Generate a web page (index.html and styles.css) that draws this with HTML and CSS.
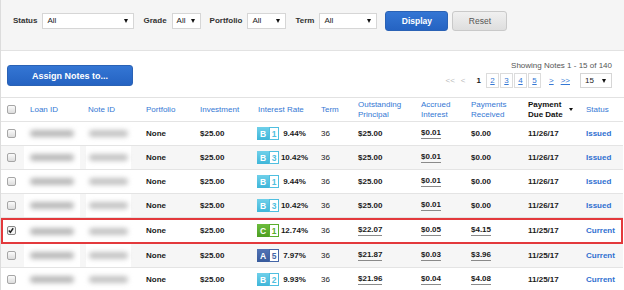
FILE: index.html
```html
<!DOCTYPE html>
<html lang="en">
<head>
  <meta charset="UTF-8" />
  <title>My Notes</title>
  <link rel="stylesheet" href="styles.css">
</head>
<body>
  <div class="page">

    <!-- Filters -->
    <div class="filters">
      <span class="lbl">Status</span>
      <div class="sel w-status"><span>All</span><i class="arr"></i></div>
      <span class="lbl">Grade</span>
      <div class="sel w-grade"><span>All</span><i class="arr"></i></div>
      <span class="lbl">Portfolio</span>
      <div class="sel w-port"><span>All</span><i class="arr"></i></div>
      <span class="lbl">Term</span>
      <div class="sel w-term"><span>All</span><i class="arr"></i></div>
      <button class="btn btn-blue btn-display">Display</button>
      <button class="btn btn-grey">Reset</button>
    </div>

    <!-- Toolbar -->
    <div class="toolbar">
      <button class="btn btn-blue btn-assign">Assign Notes to...</button>
      <div class="pager-wrap">
        <div class="showing">Showing Notes 1 - 15 of 140</div>
        <div class="pager">
          <span class="pg-off">&lt;&lt;</span>
          <span class="pg-off">&lt;</span>
          <span class="pg-cur">1</span>
          <a class="pg-box">2</a><a class="pg-box">3</a><a class="pg-box">4</a><a class="pg-box">5</a>
          <a class="pg-link">&gt;</a>
          <a class="pg-link">&gt;&gt;</a>
          <div class="sel w-per"><span>15</span><i class="arr"></i></div>
        </div>
      </div>
    </div>

    <!-- Notes table -->
    <div class="grid">
      <div class="row head">
        <div class="c"><span class="cb"></span></div>
        <div class="c">Loan ID</div>
        <div class="c">Note ID</div>
        <div class="c">Portfolio</div>
        <div class="c">Investment</div>
        <div class="c">Interest Rate</div>
        <div class="c">Term</div>
        <div class="c">Outstanding<br>Principal</div>
        <div class="c">Accrued<br>Interest</div>
        <div class="c">Payments<br>Received</div>
        <div class="c sorted"><span>Payment<br>Due Date</span><i class="sort"></i></div>
        <div class="c">Status</div>
      </div>

      <div class="row">
        <div class="c"><span class="cb"></span></div>
        <div class="c id-loan"><span class="blur"></span></div>
        <div class="c id-note"><span class="blur"></span></div>
        <div class="c">None</div>
        <div class="c">$25.00</div>
        <div class="c"><span class="grade g-b"><b>B</b><em>1</em></span><span class="rate">9.44%</span></div>
        <div class="c term">36</div>
        <div class="c">$25.00</div>
        <div class="c"><u>$0.01</u></div>
        <div class="c">$0.00</div>
        <div class="c">11/26/17</div>
        <div class="c st">Issued</div>
      </div>

      <div class="row alt">
        <div class="c"><span class="cb"></span></div>
        <div class="c id-loan"><span class="blur"></span></div>
        <div class="c id-note"><span class="blur"></span></div>
        <div class="c">None</div>
        <div class="c">$25.00</div>
        <div class="c"><span class="grade g-b"><b>B</b><em>3</em></span><span class="rate">10.42%</span></div>
        <div class="c term">36</div>
        <div class="c">$25.00</div>
        <div class="c"><u>$0.01</u></div>
        <div class="c">$0.00</div>
        <div class="c">11/26/17</div>
        <div class="c st">Issued</div>
      </div>

      <div class="row">
        <div class="c"><span class="cb"></span></div>
        <div class="c id-loan"><span class="blur"></span></div>
        <div class="c id-note"><span class="blur"></span></div>
        <div class="c">None</div>
        <div class="c">$25.00</div>
        <div class="c"><span class="grade g-b"><b>B</b><em>1</em></span><span class="rate">9.44%</span></div>
        <div class="c term">36</div>
        <div class="c">$25.00</div>
        <div class="c"><u>$0.01</u></div>
        <div class="c">$0.00</div>
        <div class="c">11/26/17</div>
        <div class="c st">Issued</div>
      </div>

      <div class="row alt">
        <div class="c"><span class="cb"></span></div>
        <div class="c id-loan"><span class="blur"></span></div>
        <div class="c id-note"><span class="blur"></span></div>
        <div class="c">None</div>
        <div class="c">$25.00</div>
        <div class="c"><span class="grade g-b"><b>B</b><em>3</em></span><span class="rate">10.42%</span></div>
        <div class="c term">36</div>
        <div class="c">$25.00</div>
        <div class="c"><u>$0.01</u></div>
        <div class="c">$0.00</div>
        <div class="c">11/26/17</div>
        <div class="c st">Issued</div>
      </div>

      <div class="row picked">
        <div class="c"><span class="cb on"><svg viewBox="0 0 9 9" width="9" height="9"><path d="M2 4.5 L3.8 6.5 L7 2" fill="none" stroke="#222" stroke-width="1.6"/></svg></span></div>
        <div class="c id-loan"><span class="blur"></span></div>
        <div class="c id-note"><span class="blur"></span></div>
        <div class="c">None</div>
        <div class="c">$25.00</div>
        <div class="c"><span class="grade g-c"><b>C</b><em>1</em></span><span class="rate">12.74%</span></div>
        <div class="c term">36</div>
        <div class="c"><u>$22.07</u></div>
        <div class="c"><u>$0.05</u></div>
        <div class="c"><u>$4.15</u></div>
        <div class="c">11/25/17</div>
        <div class="c st">Current</div>
      </div>

      <div class="row alt">
        <div class="c"><span class="cb"></span></div>
        <div class="c id-loan"><span class="blur"></span></div>
        <div class="c id-note"><span class="blur"></span></div>
        <div class="c">None</div>
        <div class="c">$25.00</div>
        <div class="c"><span class="grade g-a"><b>A</b><em>5</em></span><span class="rate">7.97%</span></div>
        <div class="c term">36</div>
        <div class="c"><u>$21.87</u></div>
        <div class="c"><u>$0.03</u></div>
        <div class="c"><u>$3.96</u></div>
        <div class="c">11/25/17</div>
        <div class="c st">Current</div>
      </div>

      <div class="row">
        <div class="c"><span class="cb"></span></div>
        <div class="c id-loan"><span class="blur"></span></div>
        <div class="c id-note"><span class="blur"></span></div>
        <div class="c">None</div>
        <div class="c">$25.00</div>
        <div class="c"><span class="grade g-b"><b>B</b><em>2</em></span><span class="rate">9.93%</span></div>
        <div class="c term">36</div>
        <div class="c"><u>$21.96</u></div>
        <div class="c"><u>$0.04</u></div>
        <div class="c"><u>$4.08</u></div>
        <div class="c">11/25/17</div>
        <div class="c st">Current</div>
      </div>
    </div>

  </div>
</body>
</html>
```

FILE: styles.css
```css
* { box-sizing: border-box; }
html, body { margin: 0; background: #fff; }
body {
  font-family: "Liberation Sans", Arial, sans-serif;
  font-size: 8px;
  color: #1a1a1a;
  overflow: hidden;
}

.page {
  width: 624px;
  border-left: 1px solid #dcdcdc;
}

/* filter bar */
.filters {
  height: 51px;
  background: #f5f5f5;
  border-bottom: 1px solid #e2e2e2;
  display: flex;
  align-items: center;
  padding: 0 0 9px 12px;
}
.lbl {
  font-weight: bold;
  color: #333;
  margin-right: 5px;
}
.sel {
  height: 16px;
  background: #fff;
  border: 1px solid #d6d6d6;
  display: flex;
  align-items: center;
  justify-content: space-between;
  padding: 0 5px 0 4px;
  margin-right: 9px;
  color: #222;
}
.arr {
  width: 0; height: 0;
  border-left: 2.5px solid transparent;
  border-right: 2.5px solid transparent;
  border-top: 4px solid #111;
  margin-top: 1px;
}
.w-status { width: 92px; }
.w-grade { width: 29px; }
.w-port { width: 39px; }
.w-term { width: 58px; margin-right: 8px; }
.w-per { width: 32px; margin: 0 0 0 10px; height: 15px; }

.btn {
  font-family: inherit;
  font-size: 8.5px;
  font-weight: bold;
  border-radius: 3px;
  cursor: pointer;
  padding: 0;
}
.btn-blue {
  color: #fff;
  background: linear-gradient(#3476d4, #2563c2);
  border: 1px solid #2a62b5;
}
.btn-grey {
  color: #555;
  font-weight: normal;
  background: linear-gradient(#f0f0f0, #dedede);
  border: 1px solid #c9c9c9;
  width: 55px;
  height: 20px;
  margin-left: 4px;
}
.btn-display { width: 63px; height: 20px; }

/* toolbar */
.toolbar {
  height: 47px;
  border-bottom: 1px solid #e2e2e2;
  display: flex;
  justify-content: space-between;
  padding: 0 12px 0 6px;
}
.btn-assign {
  width: 126px;
  height: 21px;
  margin-top: 14px;
  font-size: 9px;
}
.pager-wrap {
  display: flex;
  flex-direction: column;
  align-items: flex-end;
  padding-top: 10px;
}
.showing { color: #555; line-height: 10px; }
.pager {
  display: flex;
  align-items: center;
  margin-top: 2px;
}
.pg-off { color: #bbb; margin-right: 6px; }
.pg-cur { font-weight: bold; margin: 0 5px 0 5px; }
.pg-box {
  width: 13px;
  height: 15px;
  border: 1px solid #dcdcdc;
  margin-right: 1px;
  color: #3578d4;
  text-decoration: underline;
  display: flex;
  align-items: center;
  justify-content: center;
}
.pg-link { color: #3578d4; text-decoration: underline; margin-left: 7px; }

/* notes grid */
.grid { width: 622px; }
.row {
  display: grid;
  grid-template-columns: 22px 58px 58px 54px 58px 63px 37px 63px 50px 57px 58px 44px;
  height: 24px;
  border-bottom: 1px solid #e4e4e4;
  font-weight: bold;
}
.row.alt { background: #f6f6f6; }
.row.head {
  height: 24px;
  font-weight: normal;
  color: #3578d4;
  line-height: 10px;
}
.row.picked {
  height: 26px;
  outline: 2px solid #e3393c;
  outline-offset: -2px;
}
.c {
  display: flex;
  align-items: center;
  padding-left: 7px;
  white-space: nowrap;
}
.row .c:first-child { padding-left: 6px; }
.row .term { font-weight: normal; }
.head .sorted { color: #111; font-weight: bold; }
.sort {
  width: 0; height: 0;
  border-left: 2.5px solid transparent;
  border-right: 2.5px solid transparent;
  border-top: 3px solid #111;
  margin-left: 6px;
}
.st { color: #2f70d0; }
u {
  text-decoration: none;
  border-bottom: 1px solid #8a8a8a;
  padding-bottom: 1px;
}

.cb {
  width: 9px;
  height: 9px;
  border: 1px solid #a6a6a6;
  border-radius: 2px;
  background: linear-gradient(#fbfbfb, #dcdcdc);
  display: flex;
}
.cb.on { background: #f4f4f4; border-color: #888; }
.cb svg { margin: -1px 0 0 -1px; }

/* blurred ids */
.id-loan, .id-note { padding: 0; }
.id-loan { padding-left: 1px; }
.id-note { padding-left: 5px; }
.blur {
  display: block;
  height: 100%;
  background: #fff;
}
.id-loan .blur { width: 56px; }
.id-note .blur { width: 45px; }
.blur::after {
  content: "";
  display: block;
  height: 7px;
  margin: 8px 6px 0 6px;
  border-radius: 4px;
  background: #b9b9b9;
  filter: blur(2.5px);
}
.picked .blur { height: 20px; margin-top: 2px; }
.picked .blur::after { margin-top: 6px; }
.id-note .blur::after { margin-left: 3px; margin-right: 3px; background: #c4c4c4; }

/* grade badges */
.grade {
  display: flex;
  height: 13px;
  width: 22px;
  margin-left: -1px;
}
.grade b {
  width: 12px;
  color: #fff;
  display: flex;
  align-items: center;
  justify-content: center;
  font-size: 8.5px;
}
.grade em {
  font-style: normal;
  width: 10px;
  background: #fff;
  display: flex;
  align-items: center;
  justify-content: center;
  font-size: 8.5px;
}
.g-b b { background: linear-gradient(#6fd0ea, #3fb6d9); }
.g-b em { border: 1px solid #4fbfe0; color: #4fbfe0; }
.g-c b { background: linear-gradient(#6cbd3c, #4c9e22); }
.g-c em { border: 1px solid #5aae2c; color: #5aae2c; }
.g-a b { background: linear-gradient(#5273b5, #375a9c); }
.g-a em { border: 1px solid #4466a8; color: #4466a8; }
.rate {
  width: 31px;
  text-align: center;
}
```
